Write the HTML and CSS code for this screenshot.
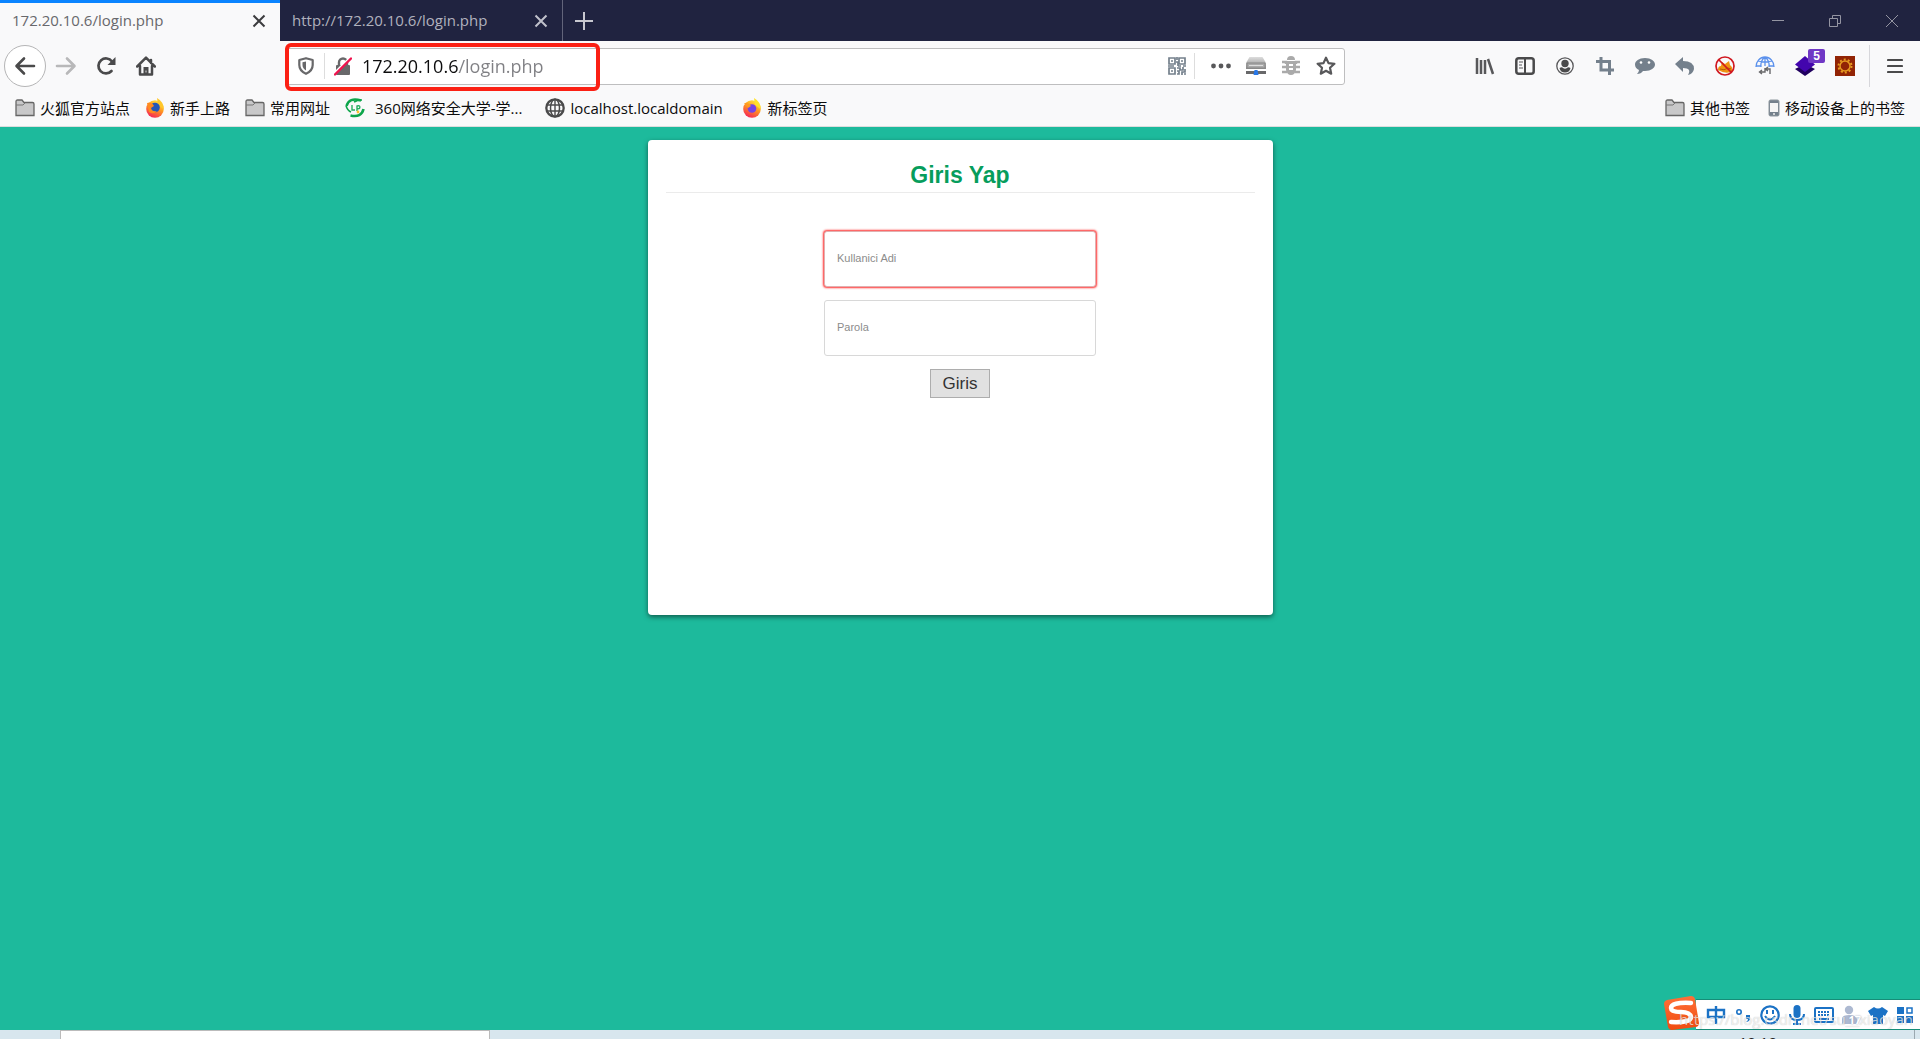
FILE: index.html
```html
<!DOCTYPE html>
<html lang="zh-CN">
<head>
<meta charset="utf-8">
<title>172.20.10.6/login.php</title>
<link rel="stylesheet" href="styles.css">
</head>
<body>
<svg class="defs" aria-hidden="true">
  <defs>
    <linearGradient id="fire" x1="0.8" y1="0" x2="0.3" y2="1"><stop offset="0" stop-color="#fff044"/><stop offset="0.45" stop-color="#ff9a1f"/><stop offset="1" stop-color="#f5215a"/></linearGradient>
    <linearGradient id="metal" x1="0" y1="0" x2="0" y2="1"><stop offset="0" stop-color="#ddd"/><stop offset="1" stop-color="#888"/></linearGradient>
    <linearGradient id="sogou" x1="0" y1="0" x2="0" y2="1"><stop offset="0" stop-color="#ff7038"/><stop offset="1" stop-color="#f04c10"/></linearGradient>
    <symbol id="folder" viewBox="0 0 20 18"><path d="M1 16V2.500Q1 1 2.500 1H7l2 2.500h8.500Q19 3.500 19 5v11.500H1z" fill="#c8c8c9" stroke="#666" stroke-width="1.300"/><path d="M1 6h7l2-2" fill="none" stroke="#777"/></symbol>
    <symbol id="close" viewBox="0 0 14 14"><path d="M1.500 1.500l11 11M12.500 1.500l-11 11" stroke="currentColor" stroke-width="2" fill="none"/></symbol>
  </defs>
</svg>

<header class="browser">
  <div class="tabs">
    <div class="tab tab-active"><a class="tab-title" href="#">172.20.10.6/login.php</a><button class="tab-close" aria-label="Close tab"><svg width="14" height="14"><use href="#close"/></svg></button></div>
    <div class="tab"><a class="tab-title" href="#">http://172.20.10.6/login.php</a><button class="tab-close" aria-label="Close tab"><svg width="14" height="14"><use href="#close"/></svg></button></div>
    <button class="new-tab" aria-label="New tab"><svg width="18" height="18" viewBox="0 0 18 18"><path d="M9 0v18M0 9h18" stroke="#c8c8d0" stroke-width="2"/></svg></button>
    <div class="window-controls">
      <button aria-label="Minimize"><svg width="14" height="14" viewBox="0 0 14 14"><path d="M1 6.500h12" stroke="#9495a2"/></svg></button>
      <button aria-label="Restore"><svg width="14" height="14" viewBox="0 0 14 14"><path d="M1.500 4.500h8v8h-8zM4.500 4.500v-3h8v8h-3" fill="none" stroke="#9495a2"/></svg></button>
      <button aria-label="Close"><svg width="14" height="14" viewBox="0 0 14 14"><path d="M1 1l12 12M13 1L1 13" stroke="#9495a2"/></svg></button>
    </div>
  </div>

  <nav class="toolbar">
    <button class="back" aria-label="Back"><svg width="22" height="20" viewBox="0 0 22 20"><path d="M10 2.500L2.500 10l7.500 7.500M3 10h17" fill="none" stroke="#4a4a4b" stroke-width="2.600" stroke-linecap="round" stroke-linejoin="round"/></svg></button>
    <button class="tool" aria-label="Forward"><svg width="22" height="20" viewBox="0 0 22 20"><path d="M12 2.500l7.500 7.500-7.500 7.500M19 10H2" fill="none" stroke="#b8b8b9" stroke-width="2.600" stroke-linecap="round" stroke-linejoin="round"/></svg></button>
    <button class="tool" aria-label="Reload"><svg width="20" height="20" viewBox="0 0 20 20"><path d="M15.500 15A7.500 7.500 0 1 1 16 5.500" fill="none" stroke="#4a4a4b" stroke-width="2.700" stroke-linecap="round"/><path d="M19.500 1v8h-8z" fill="#4a4a4b"/></svg></button>
    <button class="tool" aria-label="Home"><svg width="20" height="20" viewBox="0 0 20 20"><path d="M1.200 10.500L10 1.700l8.800 8.800M4 10v8.600h12V10M15 4v3" fill="none" stroke="#4a4a4b" stroke-width="2.500" stroke-linecap="round" stroke-linejoin="round"/><path d="M7.500 18v-7h5v7z" fill="#4a4a4b"/><path d="M10 14.500v2" stroke="#ddd"/></svg></button>
    <div class="spring"></div>
    <div class="urlbar">
      <div class="highlight"></div>
      <button class="identity" aria-label="Tracking protection"><svg width="16" height="18" viewBox="0 0 16 18"><path d="M8 1.200L14.700 3v5c0 4-2.700 7-6.700 8.800C4 15 1.300 12 1.300 8V3z" fill="none" stroke="#68686a" stroke-width="2.200" stroke-linejoin="round"/><path d="M8 4.500v9C6 12.300 4.500 10.500 4.500 8V5.200z" fill="#68686a"/></svg></button>
      <span class="divider"></span>
      <button class="identity" aria-label="Connection is not secure"><svg width="18" height="19" viewBox="0 0 18 19"><path d="M5 9V5.500a4 4 0 0 1 8 0V9" fill="none" stroke="#68686a" stroke-width="2.400"/><rect x="2" y="8" width="14" height="10" rx="1" fill="#68686a"/><path d="M0 16.500L16.500 0" stroke="#fff" stroke-width="2"/><path d="M1 17.500L17 1.500" stroke="#f0134e" stroke-width="2.400" stroke-linecap="round"/></svg></button>
      <input class="address" type="text" aria-label="Address" value="172.20.10.6/login.php">
      <button class="page-action" aria-label="QR code"><svg width="18" height="18" viewBox="0 0 18 18" fill="none" stroke="#74808c" stroke-width="1.700"><path d="M1 1h6v6H1zM11 1h6v6h-6zM1 11h6v6H1z"/><path d="M3 4h2M13 4h2M3 14h2M9 0v3M8 5h2v4M0 9h6M10 9h3M15 9h3M9 11h3v2h3v-3M17 12v3h-3v3M9 14h2v3H9M16 17h2"/></svg></button>
      <span class="divider"></span>
      <button class="page-action" aria-label="Page actions"><svg width="20" height="6" viewBox="0 0 20 6" fill="#58585a"><circle cx="2.500" cy="3" r="2.400"/><circle cx="10" cy="3" r="2.400"/><circle cx="17.500" cy="3" r="2.400"/></svg></button>
      <button class="page-action" aria-label="Proxy"><svg width="20" height="20" viewBox="0 0 20 20"><path d="M3.500 1h13L20 7v6H0V7z" fill="url(#metal)"/><path d="M1 7h18v5H1z" fill="#aaa" stroke="#888"/><path d="M3 9.500h14" stroke="#ddd"/><path d="M0 15h20v3H0z" fill="#68686a"/><path d="M8.500 14h3l1 5h-5z" fill="#2878e8"/></svg></button>
      <button class="page-action" aria-label="Debug"><svg width="18" height="20" viewBox="0 0 18 20"><path d="M5 4a4 4 0 0 1 8 0zM4 5h10v9q-1 5-5 5t-5-5z" fill="#aaa"/><path d="M0 6h4v2M18 6h-4v2M0 11h18M0 16h5M18 16h-5" stroke="#aaa" stroke-width="2.400" fill="none"/><path d="M7 9h4M7 13h4" stroke="#fff" stroke-width="1.800"/></svg></button>
      <button class="page-action" aria-label="Bookmark this page"><svg width="20" height="20" viewBox="0 0 20 20"><path d="M10 1.700l2.500 5.400 5.900.7-4.400 4 1.200 5.900L10 14.800l-5.200 2.900L6 11.800l-4.400-4 5.900-.7z" fill="none" stroke="#58585a" stroke-width="2.200" stroke-linejoin="round"/></svg></button>
    </div>
    <div class="spring"></div>
    <button class="tool" aria-label="Library"><svg width="20" height="18" viewBox="0 0 20 18"><path d="M2 1v16M6 3v14M10 3v14M13 2l5 15" stroke="#58585a" stroke-width="2.500" fill="none"/></svg></button>
    <button class="tool" aria-label="Sidebars"><svg width="20" height="18" viewBox="0 0 20 18"><rect x="1.300" y="1.300" width="17.400" height="15.400" rx="2.500" fill="none" stroke="#4a4a4b" stroke-width="2.500"/><path d="M10 2v14" stroke="#4a4a4b" stroke-width="2"/><path d="M4 5h4M4 8h3M4 11h4" stroke="#58585a" stroke-width="1.200"/></svg></button>
    <button class="tool" aria-label="Account"><svg width="18" height="18" viewBox="0 0 18 18"><circle cx="9" cy="9" r="8.200" fill="none" stroke="#58585a" stroke-width="1.300"/><circle cx="9" cy="6.500" r="3.700" fill="#4a4a4b"/><path d="M3.500 11q2.500-1.500 3.500 0 2 1.500 4 0 1-1.500 3.500 0-1 4.500-5.500 4.500T3.500 11z" fill="#4a4a4b"/></svg></button>
    <button class="tool" aria-label="Crop"><svg width="18" height="18" viewBox="0 0 18 18"><path d="M5 0v13h13M0 4.500h13.500V18" fill="none" stroke="#74808c" stroke-width="3"/></svg></button>
    <button class="tool" aria-label="Chat"><svg width="20" height="18" viewBox="0 0 20 18"><path d="M10 1c6 0 10 3 10 6.500S16 14 10 14q-1 0-2 0-2 3-6 3 2-2 2-4-4-2-4-5.500C0 4 4 1 10 1z" fill="#74808c"/><circle cx="6" cy="5.500" r="1.300" fill="#fff"/><circle cx="14" cy="5.500" r="1.300" fill="#fff"/></svg></button>
    <button class="tool" aria-label="Undo"><svg width="20" height="18" viewBox="0 0 20 18"><path d="M0 7l8-7v4q11 0 11 8-1 5-6 6 4-7-5-7v4z" fill="#74808c"/></svg></button>
    <button class="tool" aria-label="Block"><svg width="20" height="20" viewBox="0 0 20 20"><path d="M3 14q0-4 3-4l1-4 3 2 4-3 1 4q3 2 2 6-5 4-14-1z" fill="#ef9212"/><path d="M5 13q4 2 8-1l3 1" stroke="#b65d04" fill="none"/><circle cx="10" cy="10" r="9" fill="none" stroke="#d01820" stroke-width="1.700"/><path d="M3.500 3.500l13 13" stroke="#d01820" stroke-width="1.700"/></svg></button>
    <button class="tool" aria-label="Proxy switch"><svg width="20" height="20" viewBox="0 0 20 20"><path d="M1 11a9 10 0 0 1 18 0M1 10h5M14 10h5M10 1v9M6 11q-1-6 4-10M14 11q1-6-4-10M3 5q7 2 14 0" fill="none" stroke="#5b91ec" stroke-width="1.300"/><path d="M5 16h5v-4M7 14l-2.500 2L7 18M15 18v-5h-4M13 11l-2.500 2 2.500 2" fill="none" stroke="#68686a" stroke-width="1.400"/></svg></button>
    <button class="tool" aria-label="Layers"><svg width="20" height="20" viewBox="0 0 20 20"><path d="M0 13l10-5 10 5-10 7z" fill="#20005e"/><path d="M0 8.500L10 0l10 8.500L10 16z" fill="#4305ad"/></svg><span class="badge">5</span></button>
    <button class="tool" aria-label="Gear"><svg width="20" height="20" viewBox="0 0 20 20"><path d="M0 0h20v20H0z" fill="#922405"/><circle cx="10" cy="10" r="5" fill="none" stroke="#e59a20" stroke-width="1.500"/><circle cx="10" cy="10" r="6.500" fill="none" stroke="#e59a20" stroke-width="2" stroke-dasharray="2 2.080"/></svg></button>
    <span class="menu-divider"></span>
    <button class="menu" aria-label="Menu"><svg width="16" height="16" viewBox="0 0 16 16"><path d="M1 2h14M1 8h14M1 14h14" stroke="#4a4a4b" stroke-width="2.200" stroke-linecap="round"/></svg></button>
  </nav>

  <nav class="bookmarks">
    <a href="#"><svg width="20" height="18"><use href="#folder"/></svg>火狐官方站点</a>
    <a href="#"><svg width="20" height="20" viewBox="0 0 20 20"><circle cx="10" cy="11" r="8.800" fill="url(#fire)"/><path d="M12 0q7 4 6.500 11L13 7z" fill="#ffc72a"/><circle cx="10" cy="9.500" r="4.800" fill="#2457b8"/><path d="M2 5q5-1 7 3l-3 2q1 4 6 3-3 4-8 1z" fill="#ff8a20"/></svg>新手上路</a>
    <a href="#"><svg width="20" height="18"><use href="#folder"/></svg>常用网址</a>
    <a href="#" class="wide"><svg width="20" height="20" viewBox="0 0 20 20"><path d="M1.500 8Q4-1 16 2.500M18.500 11q-2 9-13 6.500" fill="none" stroke="#0da54b" stroke-width="2.600"/><path d="M1 8q2 5 5 6M17 2q-5 0-8 2" fill="none" stroke="#0da54b" stroke-width="1.600"/><path d="M7 7v5h3M12 13V8q4-1 2.500 2.500L12 11" fill="none" stroke="#27ae60" stroke-width="1.400"/><circle cx="13" cy="14" r="1.400" fill="#fbc02d"/></svg>360网络安全大学-学...</a>
    <a href="#"><svg width="20" height="20" viewBox="0 0 20 20" fill="none" stroke="#4a4a4b"><circle cx="10" cy="10" r="8.700" stroke-width="2.300"/><ellipse cx="10" cy="10" rx="4.500" ry="8.700" stroke-width="1.500"/><path d="M10 1v18M2 7h16M2 13h16" stroke-width="1.400"/></svg><span class="host">localhost.localdomain</span></a>
    <a href="#"><svg width="20" height="20" viewBox="0 0 20 20"><circle cx="10" cy="11" r="8.800" fill="url(#fire)"/><path d="M12 0q7 4 6.500 11L13 7z" fill="#ffe22a"/><circle cx="10" cy="10.500" r="4.300" fill="#7543e5"/><path d="M2 5q5 0 7 3l-3 2z" fill="#ff9a20"/></svg>新标签页</a>
    <span class="push"></span>
    <a href="#"><svg width="20" height="18"><use href="#folder"/></svg>其他书签</a>
    <a href="#"><svg width="12" height="18" viewBox="0 0 12 18"><rect x="1" y="1" width="10" height="16" rx="1.500" fill="#74808c" stroke="#8f989f"/><path d="M2 4h8v9H2z" fill="#f5f5f5"/><circle cx="6" cy="15" r="1" fill="#eee"/></svg>移动设备上的书签</a>
  </nav>
</header>

<main class="page">
  <form class="card">
    <h1>Giris Yap</h1>
    <input class="field invalid" type="text" placeholder="Kullanici Adi" aria-label="Kullanici Adi">
    <input class="field" type="password" placeholder="Parola" aria-label="Parola">
    <button class="submit" type="button">Giris</button>
  </form>
</main>

<footer class="taskbar"><div class="task-search"></div><div class="clock"><time>10:10</time></div><span class="show-desktop"></span></footer>

<aside class="ime">
  <svg class="ime-logo" width="36" height="36" viewBox="0 0 36 36"><path d="M4 5L28 1q3 0 4 3l4 24q0 3-3 4L9 35q-3 0-4-3L1 9q0-3 3-4z" fill="url(#sogou)"/><path d="M28 8Q8 7 8 13q0 4 10 4 9 0 10 5 0 6-20 5" fill="none" stroke="#fff" stroke-width="4.500" stroke-linecap="round"/></svg>
  <div class="ime-bar">
    <svg width="20" height="20" viewBox="0 0 20 20"><path d="M2 5h16v7H2zM10 1v18" fill="none" stroke="#1b72c5" stroke-width="2.400"/></svg>
    <svg width="20" height="20" viewBox="0 0 20 20"><circle cx="6" cy="7" r="2.200" fill="none" stroke="#1b72c5" stroke-width="1.600"/><path d="M13 10h4v4q-1 3-4 3 2-1 2-3h-2z" fill="#1b72c5"/></svg>
    <svg width="20" height="20" viewBox="0 0 20 20"><circle cx="10" cy="10" r="8.700" fill="none" stroke="#1b72c5" stroke-width="2.200"/><path d="M5 11q5 7 10 0M7 5v4M13 5v4" fill="none" stroke="#1b72c5" stroke-width="2"/></svg>
    <svg width="20" height="20" viewBox="0 0 20 20"><rect x="6.500" y="0" width="7" height="13" rx="3.500" fill="#1b72c5"/><path d="M3 9q0 6 7 6t7-6M10 15v4M6 19h8" fill="none" stroke="#1b72c5" stroke-width="2"/></svg>
    <svg width="20" height="20" viewBox="0 0 20 20"><rect x="1" y="3" width="18" height="14" rx="1" fill="none" stroke="#1b72c5" stroke-width="2"/><path d="M4 7h12M4 10h12" stroke="#1b72c5" stroke-width="2" stroke-dasharray="2 1"/><path d="M5 14h10" stroke="#1b72c5" stroke-width="2"/></svg>
    <span class="ime-user"><svg width="20" height="20" viewBox="0 0 20 20"><circle cx="8" cy="5" r="4.200" fill="#adb9d1"/><path d="M1 19v-5q0-4 7-4t8 4v5z" fill="#adb9d1"/></svg><b>17</b></span>
    <svg width="20" height="20" viewBox="0 0 20 20"><path d="M6 2q4 3 8 0l6 4-3 5-2-1v9H5v-9l-2 1-3-5z" fill="#1b72c5"/></svg>
    <svg width="20" height="20" viewBox="0 0 20 20"><path d="M2 2h7v7H2zM2 11h7v7H2zM11 11h7v7h-7z" fill="#1b72c5"/><path d="M12 3h5v5h-5z" fill="none" stroke="#1b72c5" stroke-width="1.500"/></svg>
  </div>
  <span class="watermark">https://blog.csdn.net/su__xiaoyan</span>
</aside>
</body>
</html>
```
FILE: styles.css
```css
* { box-sizing: border-box; }

body {
  margin: 0;
  min-height: 100vh;
  display: flex;
  flex-direction: column;
  background: #1dba9c;
  font-family: "Open Sans", "Noto Sans CJK SC", sans-serif;
  overflow: hidden;
}

button {
  display: flex;
  align-items: center;
  justify-content: center;
  padding: 0;
  border: 0;
  background: none;
}

a { color: inherit; text-decoration: none; }
svg { flex: none; }
.defs { position: absolute; width: 0; height: 0; }

/* Browser window */
.browser { background: #f9f9fa; border-bottom: 1px solid #ddd; }

.tabs { display: flex; height: 41px; background: #202340; }

.tab {
  display: flex;
  align-items: center;
  justify-content: space-between;
  width: 283px;
  padding: 0 14px 2px 12px;
  border-right: 1px solid #62647a;
  color: #b0b1bd;
  font-size: 15px;
}

.tab-active {
  width: 280px;
  padding-bottom: 4px;
  border-top: 3px solid #0a84ff;
  border-right: 0;
  background: #f9f9fa;
  color: #68686c;
}

.tab-active .tab-close { color: #3c3c3e; }
.tab-close { padding-top: 2px; color: #c0c1cb; }
.new-tab { width: 41px; }

.window-controls { display: flex; margin-left: auto; }
.window-controls button { width: 57px; }

.toolbar { display: flex; align-items: center; height: 50px; padding: 0 4px; }

.back {
  width: 42px;
  height: 42px;
  border: 1px solid #b5b5b6;
  border-radius: 50%;
  background: #fff;
}

.tool { position: relative; width: 40px; height: 40px; }
.spring { flex: 5; }

.urlbar {
  position: relative;
  flex: 44;
  display: flex;
  align-items: center;
  height: 37px;
  padding: 0 1px;
  border: 1px solid #bebebf;
  border-radius: 3px;
  background: #fff;
}

/* Red frame drawn around the first part of the address */
.highlight {
  position: absolute;
  top: -6px;
  left: -2px;
  width: 315px;
  height: 48px;
  border: 4px solid #fb2014;
  border-radius: 6px;
  pointer-events: none;
}

.identity { width: 36px; height: 32px; }
.divider { width: 1px; height: 26px; background: #ddd; }

.address {
  flex: 1;
  min-width: 0;
  padding: 0;
  margin-left: 1px;
  border: 0;
  outline: 0;
  background: linear-gradient(90deg, #0c0c0d 97px, #808084 97px);
  background-clip: text;
  -webkit-background-clip: text;
  color: transparent;
  font: inherit;
  font-size: 18px;
}

.page-action { width: 35px; height: 32px; }
.urlbar .divider + .page-action { margin-left: 8px; }

.badge {
  position: absolute;
  top: 3px;
  right: 0;
  width: 17px;
  height: 14px;
  border-radius: 2px;
  background: #7038c5;
  color: #fff;
  font-size: 12px;
  font-weight: 700;
  line-height: 14px;
}

.menu-divider { width: 1px; height: 42px; margin-left: 4px; background: #d7d7db; }
.menu { width: 46px; height: 40px; padding-left: 4px; }

.bookmarks {
  display: flex;
  align-items: center;
  gap: 15px;
  height: 35px;
  padding: 0 15px 2px;
  color: #0c0c0d;
  font-size: 15px;
  line-height: 20px;
  white-space: nowrap;
}

.bookmarks a { display: flex; align-items: center; gap: 5px; }
.bookmarks .wide { gap: 10px; margin-right: 8px; }
.host { min-width: 157px; }
.push { flex: 1; }
.push + a { margin-right: 3px; }

/* Login page */
.page { flex: 1; padding: 13px 16px; font-family: "Liberation Sans", Arial, sans-serif; }

.card {
  display: flex;
  flex-direction: column;
  align-items: center;
  max-width: 625px;
  min-height: 475px;
  margin: 0 auto;
  padding: 18px;
  border-radius: 4px;
  background: #fff;
  box-shadow: 0 2px 5px rgba(0, 0, 0, 0.5);
}

.card h1 {
  width: 100%;
  margin: 0 0 38px;
  padding: 2px 0;
  border-bottom: 1px solid #ebebeb;
  color: #069d5c;
  font-size: 23px;
  line-height: 30px;
  text-align: center;
}

.field {
  width: 272px;
  height: 56px;
  margin-bottom: 13px;
  padding: 0 12px 2px;
  border: 1px solid #d8d8d8;
  border-radius: 3px;
  background: #fff;
  font-family: inherit;
  font-size: 11px;
}

.field::placeholder { color: #8c8c8c; }
.invalid { border-color: #e0b0b0; box-shadow: 0 0 2px 1px #f33; }

.submit {
  width: 60px;
  height: 29px;
  border: 1px solid #adadad;
  background: #e1e1e1;
  color: #333;
  font-family: inherit;
  font-size: 17px;
}

/* Visible top edge of the desktop taskbar */
.taskbar {
  display: flex;
  height: 9px;
  padding-left: 60px;
  overflow: hidden;
  background: #d8e6ee;
}

.task-search { width: 430px; border: 1px solid #bbb; border-bottom: 0; background: #fff; }
.clock { margin-left: auto; margin-right: 137px; color: #222; font-size: 15px; line-height: 24px; }
.show-desktop { width: 1px; margin-right: 5px; background: #9ba8b0; }

/* Input method bar floating over the page */
.ime { position: absolute; right: 0; bottom: 9px; }

.ime-bar {
  display: flex;
  align-items: center;
  gap: 7px;
  height: 31px;
  padding: 0 5px 0 10px;
  border-top: 1px solid #168d78;
  border-bottom: 1px solid #168d78;
  background: #fff;
}

.ime-logo { position: absolute; left: -33px; bottom: -1px; z-index: 1; }

.ime-user { position: relative; display: flex; }
.ime-user b {
  position: absolute;
  right: 0;
  bottom: 0;
  color: #fff;
  font-size: 11px;
  line-height: 10px;
  text-shadow: 0 0 2px #8390ab;
}

.watermark {
  position: absolute;
  right: 7px;
  bottom: 2px;
  z-index: 2;
  color: rgba(255, 255, 255, 0.7);
  font-size: 15px;
  line-height: 18px;
  text-shadow: 0 0 1px rgba(0, 0, 0, 0.25);
  white-space: nowrap;
}
```
